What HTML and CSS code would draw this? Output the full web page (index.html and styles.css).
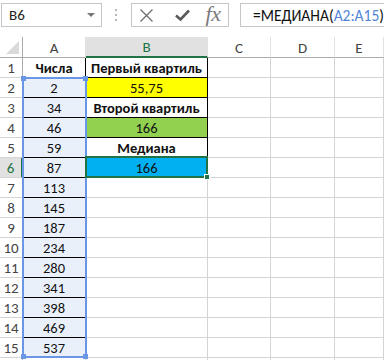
FILE: index.html
```html
<!DOCTYPE html>
<html>
<head>
<meta charset="utf-8">
<link rel="stylesheet" href="styles.css">
</head>
<body>
<div class="topbar">
  <div class="namebox"><span>B6</span><span class="caret"></span></div>
  <div class="dots"><i></i><i></i><i></i></div>
  <div class="btnbox">
    <svg class="ic-x" width="13" height="13" viewBox="0 0 13 13"><path d="M0.5 0.5L12.5 12.5M12.5 0.5L0.5 12.5" stroke="#6f6f6f" stroke-width="1.3" fill="none"/></svg>
    <svg class="ic-ok" width="15" height="12" viewBox="0 0 15 12"><path d="M1 6.5L5.5 10.5L14 1.5" stroke="#5a5a5a" stroke-width="2.6" fill="none"/></svg>
    <span class="fx">fx</span>
  </div>
  <div class="formula">=МЕДИАНА(<span class="ref">A2:A15</span>)</div>
</div>

<div class="sheet">
  <div class="grid">
    <div class="corner"><span class="tri"></span></div>
    <div class="ch">A</div>
    <div class="ch sel">B</div>
    <div class="ch">C</div>
    <div class="ch">D</div>
    <div class="ch">E</div>

    <div class="rh">1</div><div class="c a1 bold">Числа</div><div class="c b bt bold">Первый квартиль</div><div class="c"></div><div class="c"></div><div class="c"></div>
    <div class="rh">2</div><div class="c a">2</div><div class="c b yellow">55,75</div><div class="c"></div><div class="c"></div><div class="c"></div>
    <div class="rh">3</div><div class="c a">34</div><div class="c b bold">Второй квартиль</div><div class="c"></div><div class="c"></div><div class="c"></div>
    <div class="rh">4</div><div class="c a">46</div><div class="c b green">166</div><div class="c"></div><div class="c"></div><div class="c"></div>
    <div class="rh">5</div><div class="c a">59</div><div class="c b bold">Медиана</div><div class="c"></div><div class="c"></div><div class="c"></div>
    <div class="rh rsel">6</div><div class="c a">87</div><div class="c b blue">166</div><div class="c"></div><div class="c"></div><div class="c"></div>
    <div class="rh">7</div><div class="c a">113</div><div class="c"></div><div class="c"></div><div class="c"></div><div class="c"></div>
    <div class="rh">8</div><div class="c a">145</div><div class="c"></div><div class="c"></div><div class="c"></div><div class="c"></div>
    <div class="rh">9</div><div class="c a">187</div><div class="c"></div><div class="c"></div><div class="c"></div><div class="c"></div>
    <div class="rh">10</div><div class="c a">234</div><div class="c"></div><div class="c"></div><div class="c"></div><div class="c"></div>
    <div class="rh">11</div><div class="c a">280</div><div class="c"></div><div class="c"></div><div class="c"></div><div class="c"></div>
    <div class="rh">12</div><div class="c a">341</div><div class="c"></div><div class="c"></div><div class="c"></div><div class="c"></div>
    <div class="rh">13</div><div class="c a">398</div><div class="c"></div><div class="c"></div><div class="c"></div><div class="c"></div>
    <div class="rh">14</div><div class="c a">469</div><div class="c"></div><div class="c"></div><div class="c"></div><div class="c"></div>
    <div class="rh">15</div><div class="c a">537</div><div class="c"></div><div class="c"></div><div class="c"></div><div class="c"></div>
    <div class="rh"></div><div class="c"></div><div class="c"></div><div class="c"></div><div class="c"></div><div class="c"></div>
  </div>
  <div class="refbox"><i class="h tl"></i><i class="h tr"></i><i class="h bl"></i><i class="h br"></i></div>
  <div class="active"><i class="fill"></i></div>
</div>
</body>
</html>
```

FILE: styles.css
```css
* { box-sizing: border-box; }
html, body { margin: 0; padding: 0; background: #fff; overflow: hidden; }
body {
  width: 384px; height: 360px;
  font-family: Calibri, Carlito, Roboto, "Liberation Sans", sans-serif;
  font-size: 14.5px; color: #000;
}

.topbar { display: flex; align-items: flex-start; height: 37px; padding-top: 3px; }
.namebox {
  margin-left: 1px; width: 104px; height: 24px;
  border: 1px solid #c6c6c6;
  display: flex; align-items: center; justify-content: space-between;
  padding: 0 4px 0 7px; font-size: 15px; color: #222;
}
.caret { width: 0; height: 0; border-left: 4px solid transparent; border-right: 4px solid transparent; border-top: 4px solid #777; margin-right: 2px; }
.dots { width: 29px; height: 24px; display: flex; flex-direction: column; align-items: center; justify-content: center; gap: 3px; }
.dots i { width: 2px; height: 2px; background: #b8b8b8; display: block; }
.btnbox {
  width: 101px; height: 24px; border: 1px solid #c6c6c6;
  display: flex; align-items: center; padding-left: 8px;
}
.ic-x { margin-right: 22px; }
.ic-ok { margin-right: 16px; }
.fx { font-family: "Liberation Serif", serif; font-style: italic; font-size: 22px; color: #7a7a7a; line-height: 1; margin-top: -3px; letter-spacing: -0.5px; }
.formula {
  margin-left: 11px; flex: 1; height: 24px; border: 1px solid #c6c6c6; border-right: none;
  display: flex; align-items: center; padding-left: 12px; font-size: 15.5px; color: #111; white-space: nowrap;
}
.ref { color: #4f86d8; }

.sheet { position: relative; }
.grid {
  display: grid;
  grid-template-columns: 23px 63px 122px 63px 64px 1fr;
  grid-template-rows: 21px repeat(16, 20px);
}
.grid > div { border-right: 1px solid #d4d4d4; border-bottom: 1px solid #d4d4d4; display: flex; align-items: center; justify-content: center; white-space: nowrap; overflow: hidden; }
.corner { border-bottom: 1px solid #ababab !important; border-right: 1px solid #ababab !important; position: relative; }
.tri { position: absolute; right: 3px; bottom: 3px; width: 0; height: 0; border-left: 13px solid transparent; border-bottom: 13px solid #dadada; }
.ch { color: #444; font-size: 15px; border-bottom-color: #ababab !important; border-right-color: #e2e2e2 !important; padding-top: 1px; }
.ch.sel { background: #e1e1e1; color: #217346; border-bottom: 2px solid #217346 !important; }
.rh { color: #444; font-size: 15px; border-right-color: #ababab !important; border-bottom-color: #d4d4d4; }
.rh.rsel { background: #e1e1e1; color: #217346; border-right: 2px solid #217346 !important; }
.c { padding-top: 1px; color: #111; }
.a { background: #eaf0fa; border-bottom-color: #000 !important; }
.a1 { border-right-color: #000 !important; }
.b { border-right-color: #000 !important; border-bottom-color: #000 !important; }
.bold { font-weight: bold; }
.yellow { background: #ffff00; }
.green { background: #92d050; }
.blue { background: #00b0f0; }

.refbox {
  position: absolute; left: 22px; top: 40px; width: 65px; height: 281px;
  border: 2px solid #6a96e6;
}
.h { position: absolute; width: 5px; height: 5px; background: #6a96e6; display: block; }
.h.tl { left: -3px; top: -3px; }
.h.tr { right: -3px; top: -3px; }
.h.bl { left: -3px; bottom: -3px; }
.h.br { right: -3px; bottom: -3px; }

.active {
  position: absolute; left: 85px; top: 119px; width: 123px; height: 22px;
  border: 2px solid #217346;
}
.fill { position: absolute; right: -4px; bottom: -4px; width: 6px; height: 6px; background: #217346; border: 1px solid #fff; display: block; }
```
